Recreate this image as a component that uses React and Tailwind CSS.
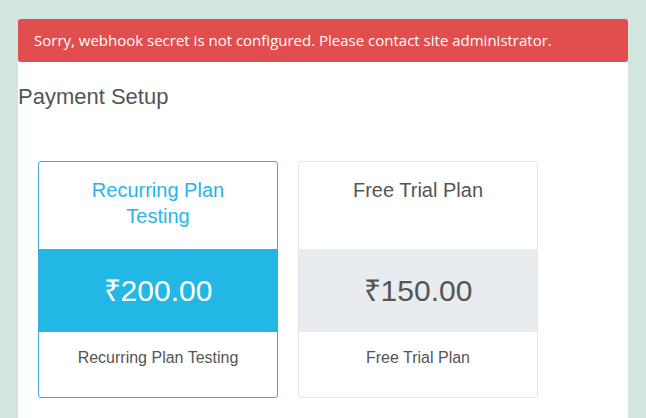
import React from "react";

const plans = [
  {
    name: "Recurring Plan Testing",
    price: "₹200.00",
    active: true,
  },
  {
    name: "Free Trial Plan",
    price: "₹150.00",
    active: false,
  },
];

function PlanCard({ plan }) {
  return (
    <div
      className={
        plan.active
          ? "w-[240px] rounded-[3px] border border-[#3fa9dc] bg-white overflow-hidden"
          : "w-[240px] rounded-[3px] border border-[#e6e6e6] bg-white overflow-hidden"
      }
    >
      <div
        className={
          plan.active
            ? "h-[87px] px-4 pt-[15px] text-center text-[20px] leading-[26px] text-[#29b5e6]"
            : "h-[87px] px-4 pt-[15px] text-center text-[20px] leading-[26px] text-[#555]"
        }
      >
        {plan.active ? (
          <>
            Recurring Plan
            <br />
            Testing
          </>
        ) : (
          plan.name
        )}
      </div>
      <div
        className={
          plan.active
            ? "flex h-[83px] items-center justify-center bg-[#23b7e5] text-[30px] text-white"
            : "flex h-[83px] items-center justify-center bg-[#e9ecef] text-[30px] text-[#555]"
        }
      >
        {plan.price}
      </div>
      <div className="h-[65px] pt-[14px] text-center text-[16px] leading-[24px] text-[#555]">
        {plan.name}
      </div>
    </div>
  );
}

export default function App() {
  return (
    <div
      className="min-h-[418px] bg-[#d2e5df] pt-[19px] pl-[18px]"
      style={{ fontFamily: '"Liberation Sans", Arial, sans-serif' }}
    >
      <div className="w-[610px]">
        <div
          className="flex h-[43px] items-center rounded-[3px] bg-[#e14e4d] px-4 text-[15px] text-white"
          style={{ fontFamily: '"Open Sans", sans-serif' }}
        >
          Sorry, webhook secret is not configured. Please contact site administrator.
        </div>
        <div className="h-[356px] bg-white">
          <h2 className="pt-[22px] text-[22px] leading-[26px] text-[#555]">
            Payment Setup
          </h2>
          <div className="mt-[51px] flex gap-5 px-5">
            {plans.map((p) => (
              <PlanCard key={p.name} plan={p} />
            ))}
          </div>
        </div>
      </div>
    </div>
  );
}
